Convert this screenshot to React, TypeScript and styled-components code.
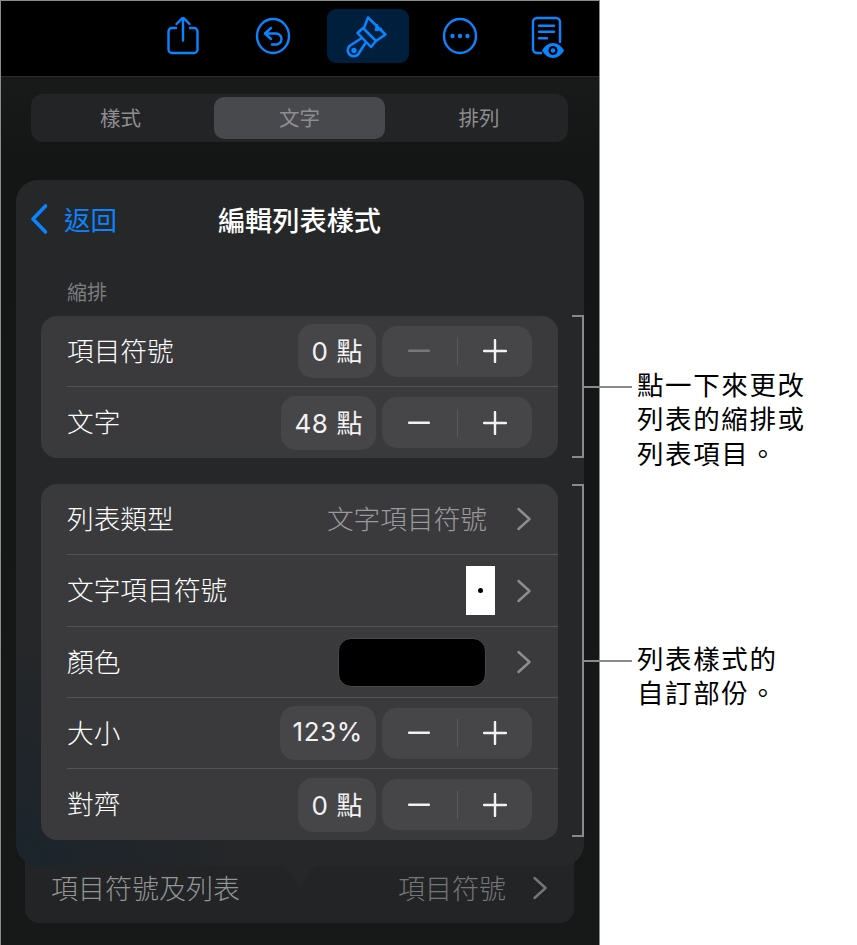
import React from "react";
import styled, { createGlobalStyle } from "styled-components";

const BLUE = "#0a84ff";

const GlobalStyle = createGlobalStyle`
  html, body {
    margin: 0;
    padding: 0;
    background: #fff;
    font-family: "Noto Sans CJK TC", "Noto Sans", sans-serif;
    font-weight: 300;
  }
`;

const Page = styled.div`
  position: relative;
  width: 857px;
  height: 945px;
  overflow: hidden;
  background: #fff;
`;

const Phone = styled.div`
  position: relative;
  box-sizing: border-box;
  width: 600px;
  height: 945px;
  display: flex;
  flex-direction: column;
  border: 1px solid #8c8c8c;
  border-bottom: none;
  background: linear-gradient(#1d1e1e, #141515 160px, #171818);
`;

const Toolbar = styled.div`
  box-sizing: border-box;
  height: 76px;
  flex: none;
  background: #000;
  border-bottom: 1px solid #2e2e2e;
  display: flex;
  align-items: flex-start;
  padding: 8px 0 0 141px;
`;

const ToolButton = styled.div<{ $active?: boolean; $gap?: number }>`
  width: 82px;
  height: 54px;
  margin-right: ${(p) => p.$gap ?? 0}px;
  border-radius: 9px;
  display: flex;
  align-items: center;
  justify-content: center;
  background: ${(p) => (p.$active ? "#001f3d" : "transparent")};
`;

const Segments = styled.div`
  box-sizing: border-box;
  width: 537px;
  height: 48px;
  margin: 17px 0 0 30px;
  flex: none;
  border-radius: 12px;
  background: #232425;
  display: grid;
  grid-template-columns: 1fr 171px 1fr;
  padding: 3px;
`;

const Segment = styled.div<{ $active?: boolean }>`
  display: flex;
  align-items: center;
  justify-content: center;
  padding-bottom: 3px;
  border-radius: 10px;
  font-size: 20.5px;
  font-weight: 400;
  color: #8e8e91;
  background: ${(p) => (p.$active ? "#48494c" : "transparent")};
  &:first-child {
    padding-right: 7px;
  }
  &:last-child {
    padding-left: 8px;
  }
`;

const BehindRow = styled.div`
  box-sizing: border-box;
  width: 549px;
  height: 96px;
  margin: 685px 0 0 24px;
  flex: none;
  padding: 25px 26px 0 26px;
  border-radius: 14px;
  background: #222425;
  display: flex;
  align-items: center;
  justify-content: space-between;
  font-size: 27px;
  color: #939495;
`;

const BehindValue = styled.div`
  display: flex;
  align-items: center;
  gap: 26px;
  color: #757677;
`;

const Popover = styled.div`
  position: absolute;
  left: 15px;
  top: 179px;
  box-sizing: border-box;
  width: 568px;
  height: 686px;
  padding: 0 26px 0 25px;
  border-radius: 22px;
  background: radial-gradient(
      circle at 0% 100%,
      #1b242c 0,
      rgba(27, 36, 44, 0) 240px
    ),
    #262728;
`;

const PopoverArrow = styled.svg`
  position: absolute;
  left: 261px;
  top: 685px;
`;

const PopoverHeader = styled.div`
  position: relative;
  height: 83px;
  display: flex;
  align-items: center;
  justify-content: center;
  padding-bottom: 5px;
  box-sizing: border-box;
`;

const BackLink = styled.div`
  position: absolute;
  left: -12px;
  top: 21px;
  display: flex;
  align-items: center;
  gap: 15px;
  color: ${BLUE};
  font-size: 26.5px;
  font-weight: 400;
  line-height: 36px;
`;

const Title = styled.div`
  font-size: 27.2px;
  font-weight: 500;
  color: #fff;
`;

const SectionLabel = styled.div`
  margin: 14px 0 0 26px;
  height: 39px;
  font-size: 20px;
  font-weight: 400;
  line-height: 30px;
  color: #7d7e80;
`;

const Group = styled.div`
  border-radius: 16px;
  background: #3a3a3c;
  margin-bottom: 26px;
  overflow: hidden;
`;

const Row = styled.div<{ $height?: number }>`
  height: ${(p) => p.$height ?? 71}px;
  margin-left: 26px;
  padding-right: 26px;
  display: flex;
  align-items: center;
  border-bottom: 1px solid #545456;
  box-sizing: border-box;
  &:last-child {
    border-bottom: none;
  }
`;

const RowLabel = styled.div`
  flex: 1;
  padding-bottom: 4px;
  font-size: 26.7px;
  color: #fff;
`;

const ValuePill = styled.div`
  box-sizing: border-box;
  height: 54px;
  padding: 0 13px 3px;
  margin-right: 6px;
  border-radius: 15px;
  background: #464649;
  display: flex;
  align-items: center;
  font-family: "Inter", "Noto Sans CJK TC", sans-serif;
  font-size: 26px;
  font-weight: 400;
  letter-spacing: 0.6px;
  color: #f2f2f3;
`;

const Stepper = styled.div`
  width: 150px;
  height: 51px;
  border-radius: 15px;
  background: #464649;
  display: flex;
  align-items: center;
`;

const StepButton = styled.div`
  flex: 1;
  display: flex;
  align-items: center;
  justify-content: center;
`;

const StepDivider = styled.div`
  width: 1px;
  height: 28px;
  background: #5a5a5d;
`;

const RowValue = styled.div`
  padding-bottom: 4px;
  font-size: 26.7px;
  color: #9a9a9e;
  margin-right: 29px;
`;

const BulletSwatch = styled.div`
  width: 29px;
  height: 49px;
  margin-right: 21px;
  background: #fff;
  display: flex;
  align-items: center;
  justify-content: center;
  &::after {
    content: "";
    width: 5px;
    height: 5px;
    border-radius: 50%;
    background: #000;
  }
`;

const ColorSwatch = styled.div`
  box-sizing: border-box;
  width: 148px;
  height: 49px;
  margin-right: 30px;
  border-radius: 13px;
  border: 1px solid #4a4a4c;
  background: #000;
`;

const Callout = styled.div<{ $top: number; $height: number }>`
  position: absolute;
  left: 572px;
  top: ${(p) => p.$top}px;
  height: ${(p) => p.$height}px;
  width: 12px;
  box-sizing: border-box;
  border: 2px solid #8a8a8a;
  border-left: none;
  &::after {
    content: "";
    position: absolute;
    left: 10px;
    top: calc(50% - 1px);
    width: 50px;
    height: 2px;
    background: #8a8a8a;
  }
`;

const CalloutText = styled.div`
  position: absolute;
  left: 65px;
  top: calc(50% - 20px);
  width: 190px;
  font-size: 26.5px;
  font-weight: 400;
  letter-spacing: 1.6px;
  line-height: 34.5px;
  color: #000;
`;

const Minus = ({ dim }: { dim?: boolean }) => (
  <svg width="24" height="4" viewBox="0 0 24 4">
    <rect x="1" y="0.5" width="22" height="2.4" rx="1" fill={dim ? "#77777a" : "#f2f2f3"} />
  </svg>
);

const Plus = () => (
  <svg width="24" height="24" viewBox="0 0 24 24">
    <path d="M1 12h22M12 1v22" stroke="#f2f2f3" strokeWidth="2.4" strokeLinecap="round" />
  </svg>
);

const Chevron = ({ color = "#8e8e92" }: { color?: string }) => (
  <svg width="16" height="24" viewBox="0 0 16 24" fill="none">
    <path d="M2.500 2l11 10-11 10" stroke={color} strokeWidth="2.400" strokeLinecap="round" strokeLinejoin="round" />
  </svg>
);

const ShareIcon = () => (
  <svg width="34" height="38" viewBox="0 1 34 38" fill="none" stroke={BLUE} strokeWidth="2.400" strokeLinecap="round" strokeLinejoin="round">
    <path d="M10 12H6a3.500 3.500 0 0 0-3.500 3.500v18A3.500 3.500 0 0 0 6 37h22a3.500 3.500 0 0 0 3.500-3.500v-18A3.500 3.500 0 0 0 28 12h-4" />
    <path d="M17 24.500V2M10.500 8L17 1.500 23.500 8" />
  </svg>
);

const UndoIcon = () => (
  <svg width="36" height="38" viewBox="0 0 36 38" fill="none" stroke={BLUE} strokeWidth="2.400" strokeLinecap="round" strokeLinejoin="round">
    <ellipse cx="18" cy="19" rx="16" ry="17" />
    <path d="M16 11l-6 5.500 6 5.500" />
    <path d="M10.500 16.500H21a5.500 5.500 0 0 1 0 11h-4" />
  </svg>
);

const BrushIcon = () => (
  <svg width="56" height="54" viewBox="0 -1 56 54" fill="none" stroke={BLUE} strokeWidth="2.500" strokeLinecap="round" strokeLinejoin="round">
    <path d="M24 18L28 7.500 45.500 24.500 36 31" />
    <path d="M37 15l-1 5 5-1" />
    <path d="M23 18l-5.500 5L31 37l5-6z" />
    <path d="M21 28.500L9.500 36a6 6 0 0 0 8.500 8.500L25.500 33" />
    <circle cx="14" cy="40.500" r="1.400" />
  </svg>
);

const MoreIcon = () => (
  <svg width="36" height="38" viewBox="0 0 36 38" fill="none">
    <ellipse cx="18" cy="19" rx="16" ry="17" stroke={BLUE} strokeWidth="2.400" />
    <circle cx="10.500" cy="19" r="2.200" fill={BLUE} />
    <circle cx="18" cy="19" r="2.200" fill={BLUE} />
    <circle cx="25.500" cy="19" r="2.200" fill={BLUE} />
  </svg>
);

const DocIcon = () => (
  <svg width="36" height="44" viewBox="0 -1 36 44" fill="none">
    <path d="M10 38H6a4 4 0 0 1-4-4V7a4 4 0 0 1 4-4h19a4 4 0 0 1 4 4v20" stroke={BLUE} strokeWidth="2.400" strokeLinecap="round" />
    <path d="M8 10.700h15M8 16.700h15M8 23.300h8" stroke={BLUE} strokeWidth="2.400" strokeLinecap="round" />
    <path d="M11 35.500c2.500-4.500 6.500-7.500 11-7.500s8.500 3 11 7.500c-2.500 4.500-6.500 7.500-11 7.500s-8.500-3-11-7.500z" fill={BLUE} />
    <circle cx="22" cy="35.500" r="4.500" fill="#000" />
    <circle cx="22" cy="35.500" r="2.300" fill={BLUE} />
  </svg>
);

const StepperControl = ({ dimMinus }: { dimMinus?: boolean }) => (
  <Stepper>
    <StepButton>
      <Minus dim={dimMinus} />
    </StepButton>
    <StepDivider />
    <StepButton>
      <Plus />
    </StepButton>
  </Stepper>
);

const App = () => {
  return (
    <Page>
      <GlobalStyle />
      <Phone>
        <Toolbar>
          <ToolButton $gap={8}><ShareIcon /></ToolButton>
          <ToolButton $gap={13}><UndoIcon /></ToolButton>
          <ToolButton $gap={10} $active><BrushIcon /></ToolButton>
          <ToolButton $gap={7}><MoreIcon /></ToolButton>
          <ToolButton><DocIcon /></ToolButton>
        </Toolbar>
        <Segments>
          <Segment>樣式</Segment>
          <Segment $active>文字</Segment>
          <Segment>排列</Segment>
        </Segments>
        <BehindRow>
          <span>項目符號及列表</span>
          <BehindValue>
            <span>項目符號</span>
            <Chevron color="#757677" />
          </BehindValue>
        </BehindRow>
        <Popover>
          <PopoverHeader>
            <BackLink>
              <svg width="20" height="32" viewBox="0 0 20 32" fill="none">
                <path d="M16.500 3L4 16l12.500 13" stroke={BLUE} strokeWidth="3.600" strokeLinecap="round" strokeLinejoin="round" />
              </svg>
              <span>返回</span>
            </BackLink>
            <Title>編輯列表樣式</Title>
          </PopoverHeader>
          <SectionLabel>縮排</SectionLabel>
          <Group>
            <Row>
              <RowLabel>項目符號</RowLabel>
              <ValuePill>0 點</ValuePill>
              <StepperControl dimMinus />
            </Row>
            <Row>
              <RowLabel>文字</RowLabel>
              <ValuePill>48 點</ValuePill>
              <StepperControl />
            </Row>
          </Group>
          <Group>
            <Row>
              <RowLabel>列表類型</RowLabel>
              <RowValue>文字項目符號</RowValue>
              <Chevron />
            </Row>
            <Row $height={72}>
              <RowLabel>文字項目符號</RowLabel>
              <BulletSwatch />
              <Chevron />
            </Row>
            <Row>
              <RowLabel>顏色</RowLabel>
              <ColorSwatch />
              <Chevron />
            </Row>
            <Row>
              <RowLabel>大小</RowLabel>
              <ValuePill>123%</ValuePill>
              <StepperControl />
            </Row>
            <Row>
              <RowLabel>對齊</RowLabel>
              <ValuePill>0 點</ValuePill>
              <StepperControl />
            </Row>
          </Group>
          <PopoverArrow width="46" height="24" viewBox="0 0 46 24">
            <path d="M0 0h46c-7 0-10 3-14 8l-6.500 13c-1.200 2-3.800 2-5 0L14 8C10 3 7 0 0 0z" fill="#262728" />
          </PopoverArrow>
        </Popover>
      </Phone>
      <Callout $top={315} $height={143}>
        <CalloutText>
          點一下來更改
          <br />
          列表的縮排或
          <br />
          列表項目。
        </CalloutText>
      </Callout>
      <Callout $top={484} $height={353}>
        <CalloutText>
          列表樣式的
          <br />
          自訂部份。
        </CalloutText>
      </Callout>
    </Page>
  );
};

export default App;
